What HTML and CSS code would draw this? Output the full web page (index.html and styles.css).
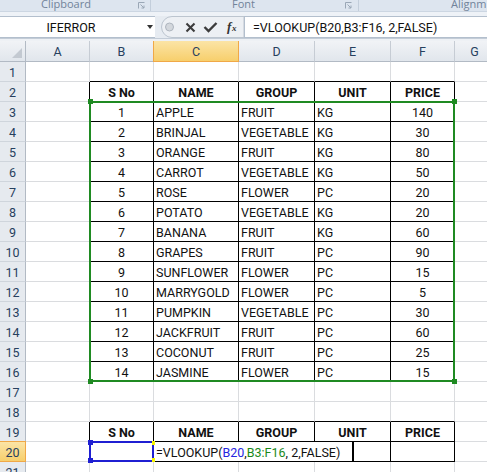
FILE: index.html
```html
<!DOCTYPE html>
<html>
<head>
<meta charset="utf-8">
<link rel="stylesheet" href="styles.css">
</head>
<body>
<div class="app">
  <div class="ribbon">
    <div class="grp g1"><span class="glabel">Clipboard</span><svg class="launch" width="7" height="7" viewBox="0 0 7 7"><path d="M0.5 6.5V0.5H6.5" fill="none" stroke="#9aa7b6"/><path d="M2.5 2.5L6 6M6 3.5V6H3.5" fill="none" stroke="#9aa7b6"/></svg></div>
    <div class="grp g2"><span class="glabel">Font</span><svg class="launch l2" width="7" height="7" viewBox="0 0 7 7"><path d="M0.5 6.5V0.5H6.5" fill="none" stroke="#9aa7b6"/><path d="M2.5 2.5L6 6M6 3.5V6H3.5" fill="none" stroke="#9aa7b6"/></svg></div>
    <div class="grp g3"><span class="glabel">Alignm</span></div>
  </div>
  <div class="edge"></div>
  <div class="fbar">
    <div class="namebox"><span class="nbtext">IFERROR</span><span class="tri"></span></div>
    <div class="btns">
      <svg width="89" height="22" viewBox="0 0 89 22">
        <path d="M17 0.5 A10.5 10.5 0 0 0 17 21.5 H89 V0.5 Z" fill="#edf0f4" stroke="#bcc5cf"/>
        <circle cx="14.5" cy="11" r="4" fill="#d3d7dc" stroke="#aeb5be"/>
        <path d="M31.5 7.5 L39.5 15.5 M39.5 7.5 L31.5 15.5" stroke="#3c3c3c" stroke-width="2.1" fill="none"/>
        <path d="M49.5 11 L53.5 15 L61.5 7" stroke="#3c3c3c" stroke-width="2.4" fill="none"/>
        <text x="72" y="15" font-family="Liberation Serif" font-style="italic" font-weight="bold" font-size="13" fill="#333">f</text>
        <text x="77" y="15" font-family="Liberation Serif" font-style="italic" font-weight="bold" font-size="9" fill="#333">x</text>
      </svg>
    </div>
    <div class="formula">=VLOOKUP(B20,B3:F16, 2,FALSE)</div>
  </div>
  <div class="gap"></div>

  <div class="sheet">
    <div class="row hrow">
      <div class="corner"><svg width="10" height="10" viewBox="0 0 10 10"><path d="M10 0 V10 H0 Z" fill="#c3c9d1"/></svg></div>
      <div class="ch">A</div><div class="ch">B</div><div class="ch chs">C</div><div class="ch">D</div><div class="ch">E</div><div class="ch">F</div><div class="ch">G</div>
    </div>
    <div class="row"><div class="rh">1</div><div class="c"></div><div class="c tt"></div><div class="c tt"></div><div class="c tt"></div><div class="c tt"></div><div class="c tt"></div><div class="c"></div></div>
    <div class="row"><div class="rh">2</div><div class="c tl"></div><div class="c t n b">S No</div><div class="c t n b">NAME</div><div class="c t n b">GROUP</div><div class="c t n b">UNIT</div><div class="c t n b">PRICE</div><div class="c"></div></div>
    <div class="row"><div class="rh">3</div><div class="c tl"></div><div class="c t n">1</div><div class="c t">APPLE</div><div class="c t">FRUIT</div><div class="c t">KG</div><div class="c t n">140</div><div class="c"></div></div>
    <div class="row"><div class="rh">4</div><div class="c tl"></div><div class="c t n">2</div><div class="c t">BRINJAL</div><div class="c t">VEGETABLE</div><div class="c t">KG</div><div class="c t n">30</div><div class="c"></div></div>
    <div class="row"><div class="rh">5</div><div class="c tl"></div><div class="c t n">3</div><div class="c t">ORANGE</div><div class="c t">FRUIT</div><div class="c t">KG</div><div class="c t n">80</div><div class="c"></div></div>
    <div class="row"><div class="rh">6</div><div class="c tl"></div><div class="c t n">4</div><div class="c t">CARROT</div><div class="c t">VEGETABLE</div><div class="c t">KG</div><div class="c t n">50</div><div class="c"></div></div>
    <div class="row"><div class="rh">7</div><div class="c tl"></div><div class="c t n">5</div><div class="c t">ROSE</div><div class="c t">FLOWER</div><div class="c t">PC</div><div class="c t n">20</div><div class="c"></div></div>
    <div class="row"><div class="rh">8</div><div class="c tl"></div><div class="c t n">6</div><div class="c t">POTATO</div><div class="c t">VEGETABLE</div><div class="c t">KG</div><div class="c t n">20</div><div class="c"></div></div>
    <div class="row"><div class="rh">9</div><div class="c tl"></div><div class="c t n">7</div><div class="c t">BANANA</div><div class="c t">FRUIT</div><div class="c t">KG</div><div class="c t n">60</div><div class="c"></div></div>
    <div class="row"><div class="rh">10</div><div class="c tl"></div><div class="c t n">8</div><div class="c t">GRAPES</div><div class="c t">FRUIT</div><div class="c t">PC</div><div class="c t n">90</div><div class="c"></div></div>
    <div class="row"><div class="rh">11</div><div class="c tl"></div><div class="c t n">9</div><div class="c t">SUNFLOWER</div><div class="c t">FLOWER</div><div class="c t">PC</div><div class="c t n">15</div><div class="c"></div></div>
    <div class="row"><div class="rh">12</div><div class="c tl"></div><div class="c t n">10</div><div class="c t">MARRYGOLD</div><div class="c t">FLOWER</div><div class="c t">PC</div><div class="c t n">5</div><div class="c"></div></div>
    <div class="row"><div class="rh">13</div><div class="c tl"></div><div class="c t n">11</div><div class="c t">PUMPKIN</div><div class="c t">VEGETABLE</div><div class="c t">PC</div><div class="c t n">30</div><div class="c"></div></div>
    <div class="row"><div class="rh">14</div><div class="c tl"></div><div class="c t n">12</div><div class="c t">JACKFRUIT</div><div class="c t">FRUIT</div><div class="c t">PC</div><div class="c t n">60</div><div class="c"></div></div>
    <div class="row"><div class="rh">15</div><div class="c tl"></div><div class="c t n">13</div><div class="c t">COCONUT</div><div class="c t">FRUIT</div><div class="c t">PC</div><div class="c t n">25</div><div class="c"></div></div>
    <div class="row"><div class="rh">16</div><div class="c tl"></div><div class="c t n">14</div><div class="c t">JASMINE</div><div class="c t">FLOWER</div><div class="c t">PC</div><div class="c t n">15</div><div class="c"></div></div>
    <div class="row"><div class="rh">17</div><div class="c"></div><div class="c"></div><div class="c"></div><div class="c"></div><div class="c"></div><div class="c"></div><div class="c"></div></div>
    <div class="row"><div class="rh">18</div><div class="c"></div><div class="c tt"></div><div class="c tt"></div><div class="c tt"></div><div class="c tt"></div><div class="c tt"></div><div class="c"></div></div>
    <div class="row"><div class="rh">19</div><div class="c tl"></div><div class="c t n b">S No</div><div class="c t n b">NAME</div><div class="c t n b">GROUP</div><div class="c t n b">UNIT</div><div class="c t n b">PRICE</div><div class="c"></div></div>
    <div class="row"><div class="rh rhs">20</div><div class="c tl"></div><div class="c t"></div><div class="c t"></div><div class="c t"></div><div class="c t"></div><div class="c t"></div><div class="c"></div></div>
    <div class="row"><div class="rh">21</div><div class="c"></div><div class="c"></div><div class="c"></div><div class="c"></div><div class="c"></div><div class="c"></div><div class="c"></div></div>

    <div class="range-green"></div>
    <div class="hd g" style="left:88px;top:58px"></div>
    <div class="hd g" style="left:452px;top:58px"></div>
    <div class="hd g" style="left:452px;top:338px"></div>
    <div class="hd g" style="left:88px;top:338px"></div>

    <div class="range-blue"></div>
    <div class="hd bl" style="left:88px;top:399px"></div>
    <div class="hd bl" style="left:88px;top:417px"></div>
    <div class="yl" style="top:400px"></div>
    <div class="yl" style="top:417px"></div>

    <div class="editbox">=VLOOKUP(<span class="rb">B20</span>,<span class="rg">B3:F16</span>, 2,FALSE)</div>
  </div>
</div>
</body>
</html>
```
FILE: styles.css
```css
html, body {
  margin: 0;
  padding: 0;
  background: #ffffff;
  overflow: hidden;
}
.app {
  width: 487px;
  height: 472px;
  overflow: hidden;
  font-family: Roboto, "Liberation Sans", sans-serif;
  font-size: 12.5px;
  color: #111;
}
.ribbon {
  height: 11px;
  display: flex;
  background: #dde5ef;
  overflow: hidden;
  font-family: "Open Sans", "Noto Sans", sans-serif;
  font-size: 11px;
  color: #71839a;
}
.grp {
  display: flex;
  align-items: flex-start;
  box-sizing: border-box;
  border-right: 1px solid #c3cedb;
}
.g1 { width: 151px; padding-left: 41px; }
.g2 { width: 208px; padding-left: 81px; }
.g3 { flex: 1; padding-left: 92px; border-right: 0; }
.glabel { line-height: 7px; white-space: nowrap; }
.launch { margin-left: auto; margin-right: 5px; margin-top: 2px; }
.l2 { margin-right: 6px; }
.edge {
  height: 5px;
  box-sizing: border-box;
  border-top: 1px solid #ccd6e2;
  background: #eef2f7;
}
.fbar {
  display: flex;
  height: 22px;
  background: #e6ebf1;
}
.namebox {
  width: 155px;
  box-sizing: border-box;
  background: #fff;
  border-top: 1px solid #b3bfcd;
  border-bottom: 1px solid #b3bfcd;
  display: flex;
  align-items: center;
}
.nbtext {
  width: 142px;
  text-align: center;
  padding-top: 1px;
}
.tri {
  width: 0;
  height: 0;
  border-left: 3.5px solid transparent;
  border-right: 3.5px solid transparent;
  border-top: 4px solid #333;
  margin-left: 5px;
}
.btns {
  width: 89px;
  height: 22px;
}
.btns svg { display: block; }
.formula {
  flex: 1;
  background: #fff;
  box-sizing: border-box;
  border: 1px solid #b3bfcd;
  border-right: 0;
  padding-left: 8px;
  line-height: 20px;
  padding-top: 1px;
  white-space: nowrap;
}
.gap {
  height: 3px;
  box-sizing: border-box;
  border-top: 1px solid #c3ccd7;
  background: #eef1f5;
}
.sheet {
  position: relative;
}
.row {
  display: grid;
  grid-template-columns: 26px 64px 64px 85px 76px 76px 64px 40px;
  height: 20px;
}
.hrow { height: 21px; }
.corner, .ch {
  box-sizing: border-box;
  background: linear-gradient(#f1f3f6, #e1e6ec);
  border-right: 1px solid #c6ccd4;
  border-bottom: 1px solid #b2bac4;
  color: #27405e;
  text-align: center;
  line-height: 19px;
  padding-top: 1px;
}
.corner {
  border-right-color: #b2bac4;
  display: flex;
  align-items: flex-end;
  justify-content: flex-end;
  padding: 0 3px 3px 0;
}
.corner svg { display: block; }
.chs {
  background: linear-gradient(#fbe4a6, #f7cf6c);
  border-right-color: #f0a847;
  border-bottom-color: #f0a847;
  border-left: 1px solid #f0a847;
  margin-left: -1px;
}
.rh {
  box-sizing: border-box;
  background: #e6eaef;
  border-right: 1px solid #b2bac4;
  border-bottom: 1px solid #cfd5dc;
  color: #27405e;
  text-align: center;
  line-height: 17px;
  padding-top: 2px;
}
.rhs {
  background: linear-gradient(#fbe4a6, #f7cf6c);
  border-bottom-color: #f0a847;
  border-top: 1px solid #f0a847;
  border-right-color: #f0a847;
  margin-top: -1px;
  padding-top: 2px;
}
.c {
  box-sizing: border-box;
  border-right: 1px solid #dadcdf;
  border-bottom: 1px solid #dadcdf;
  padding: 2px 0 0 2px;
  line-height: 17px;
  white-space: nowrap;
  overflow: hidden;
}
.t { border-right-color: #000; border-bottom-color: #000; }
.tl { border-right-color: #000; }
.tt { border-bottom-color: #000; }
.n { text-align: center; padding-left: 0; }
.b { font-weight: bold; }

.range-green {
  position: absolute;
  left: 89px;
  top: 60px;
  width: 366px;
  height: 281px;
  box-sizing: border-box;
  border: 2px solid #1f8a22;
}
.range-blue {
  position: absolute;
  left: 89px;
  top: 400px;
  width: 65px;
  height: 21px;
  box-sizing: border-box;
  border: 2px solid #1f1fd2;
}
.hd {
  position: absolute;
  width: 5px;
  height: 5px;
}
.g { background: #1f8a22; }
.bl { background: #1f1fd2; }
.yl {
  position: absolute;
  left: 152px;
  width: 3px;
  height: 4px;
  background: #f5f500;
}
.editbox {
  position: absolute;
  left: 155px;
  top: 401px;
  width: 199px;
  height: 19px;
  box-sizing: border-box;
  background: #fff;
  border-right: 2px solid #000;
  padding-left: 1px;
  line-height: 17px;
  padding-top: 2px;
  white-space: nowrap;
  color: #111;
}
.rb { color: #2525e0; }
.rg { color: #1a8a1a; }
```
